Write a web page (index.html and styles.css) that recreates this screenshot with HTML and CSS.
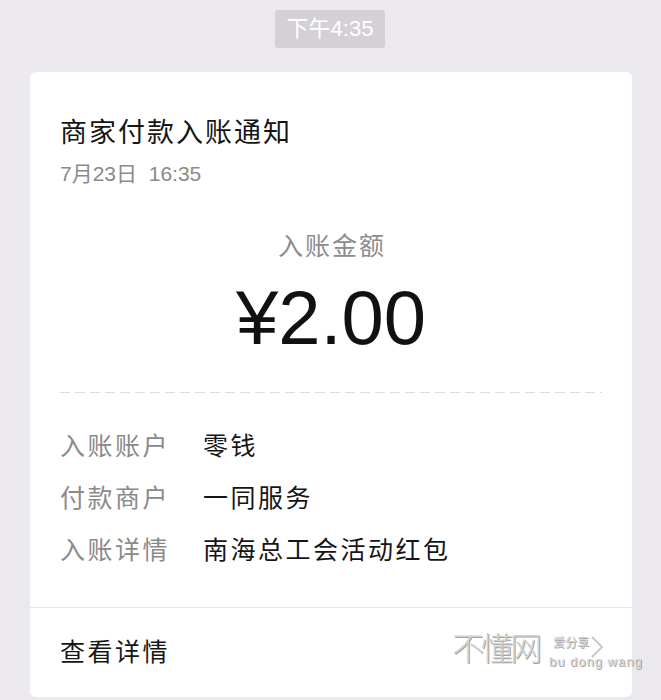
FILE: index.html
```html
<!DOCTYPE html>
<html lang="zh-CN">
<head>
<meta charset="utf-8">
<title>商家付款入账通知</title>
<link rel="stylesheet" href="styles.css">
</head>
<body>
<div class="page">
  <div class="time-wrap"><span class="time">下午4:35</span></div>
  <div class="card">
    <div class="head">
      <div class="title">商家付款入账通知</div>
      <div class="date">7月23日&nbsp;&nbsp;16:35</div>
    </div>
    <div class="amount-block">
      <div class="amount-label">入账金额</div>
      <div class="amount">¥2.00</div>
    </div>
    <div class="dash"></div>
    <div class="rows">
      <div class="row"><span class="k">入账账户</span><span class="v">零钱</span></div>
      <div class="row"><span class="k">付款商户</span><span class="v">一同服务</span></div>
      <div class="row"><span class="k">入账详情</span><span class="v">南海总工会活动红包</span></div>
    </div>
    <div class="footer">
      <span class="more">查看详情</span>
      <svg class="chev" width="14" height="24" viewBox="0 0 14 24"><path d="M2 2 L12 12 L2 22" fill="none" stroke="#c9c9cd" stroke-width="2"/></svg>
    </div>
  </div>
  <div class="watermark">
    <span class="wm-big">不懂网</span>
    <span class="wm-small"><span class="wm-cn">爱分享</span><span class="wm-en">bu dong wang</span></span>
  </div>
</div>
</body>
</html>
```
FILE: styles.css
```css
html, body {
  margin: 0;
  padding: 0;
  background: #ece9ee;
  font-family: "Liberation Sans", "Noto Sans CJK SC", sans-serif;
}
.page {
  position: relative;
  width: 661px;
  height: 700px;
  overflow: hidden;
  padding-top: 10px;
  box-sizing: border-box;
}
.time-wrap {
  display: flex;
  justify-content: center;
}
.time {
  display: block;
  background: #d4d0d6;
  color: #fff;
  font-size: 22px;
  line-height: 38px;
  height: 38px;
  padding: 0 12px;
  border-radius: 3px;
  margin-left: -1px;
}
.card {
  margin: 24px 29px 0 30px;
  background: #fff;
  border-radius: 6px;
  height: 625px;
  display: flex;
  flex-direction: column;
}
.head {
  padding: 43px 30px 0;
}
.title {
  font-size: 27px;
  line-height: 36px;
  letter-spacing: 2px;
  color: #151515;
}
.date {
  margin-top: 10px;
  font-size: 21px;
  line-height: 26px;
  color: #8a8a8a;
}
.amount-block {
  display: flex;
  flex-direction: column;
  align-items: center;
  margin-top: 43px;
}
.amount-label {
  font-size: 25px;
  line-height: 32px;
  letter-spacing: 2px;
  color: #8c8c8c;
  padding-left: 2px;
}
.amount {
  margin-top: 16px;
  font-size: 76px;
  line-height: 80px;
  color: #111;
}
.dash {
  margin: 34px 30px 0;
  height: 1px;
  background-image: linear-gradient(to right, #dcdcdc 0 10px, transparent 10px 15px);
  background-size: 15px 1px;
}
.rows {
  margin-top: 25px;
  padding: 0 30px;
}
.row {
  display: flex;
  height: 52px;
  align-items: center;
  font-size: 25px;
  letter-spacing: 2.5px;
}
.k {
  width: 143px;
  color: #8a8a8a;
}
.v {
  color: #151515;
}
.footer {
  margin-top: 33px;
  border-top: 1px solid #e6e6e6;
  flex: 1;
  display: flex;
  align-items: center;
  justify-content: space-between;
  padding: 0 28px 6px 30px;
}
.more {
  font-size: 25px;
  letter-spacing: 2.5px;
  color: #151515;
}
.chev {
  margin-top: -6px;
}
.watermark {
  position: absolute;
  left: 452px;
  top: 618px;
  display: flex;
  align-items: flex-end;
  gap: 10px;
  color: #cfcfcf;
  text-shadow: 1px 1px 0 #9a9a9a;
  opacity: 0.9;
}
.wm-big {
  font-size: 32px;
  line-height: 62px;
  letter-spacing: -3px;
  font-weight: 300;
}
.wm-small {
  display: flex;
  flex-direction: column;
  padding-bottom: 10px;
}
.wm-cn {
  font-size: 12px;
  line-height: 22px;
  margin-left: 4px;
}
.wm-en {
  font-size: 13px;
  line-height: 16px;
  letter-spacing: 1px;
}
```
